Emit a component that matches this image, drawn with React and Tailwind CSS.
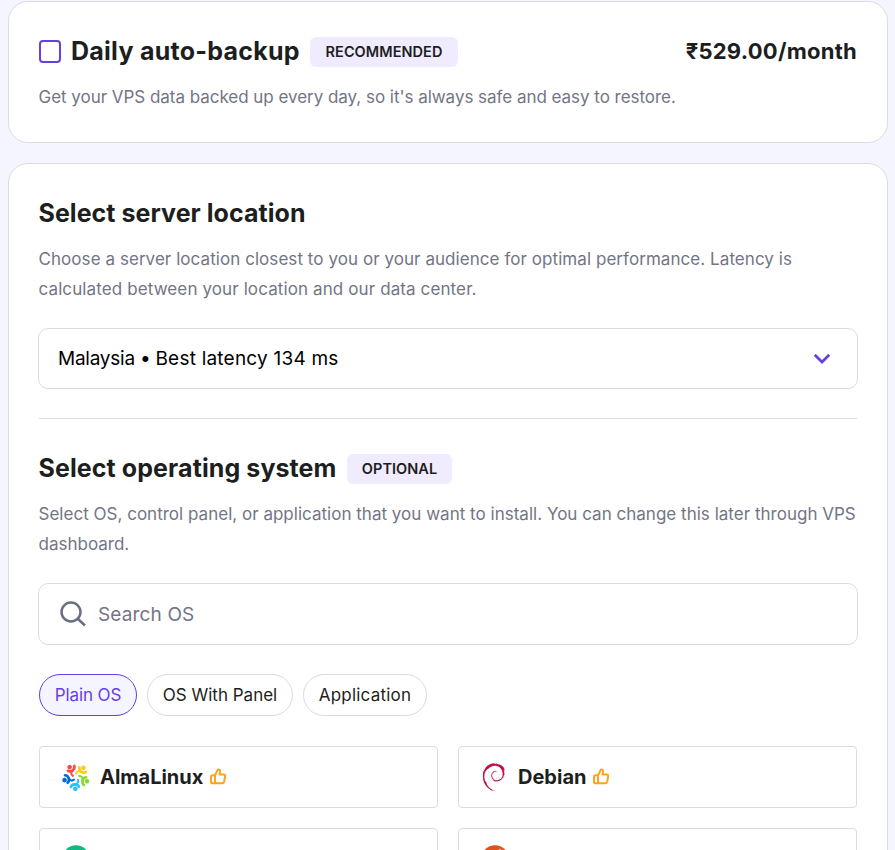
import { SiDebian } from "react-icons/si";

function Alma() {
  const colors = ["#ff4649", "#ffcb12", "#86da2f", "#24c2ff", "#0069da"];
  return (
    <svg className="h-[30px] w-[30px] shrink-0" viewBox="-15 -15 30 30" fill="none">
      {colors.map((c, i) => (
        <g key={c} transform={`rotate(${-33 + i * 72})`}>
          <circle cx="0" cy="-11.8" r="2.3" fill={c} />
          <path d="M-3.4 -9.6 Q-2.4 -7.4 0.4 -7.4 Q3.8 -7.4 4.6 -10.2" stroke={c} strokeWidth="2.6" strokeLinecap="round" />
          <path d="M1 -7.2 Q-3.4 -6.4 -2 -2.6" stroke={c} strokeWidth="2" strokeLinecap="round" />
        </g>
      ))}
    </svg>
  );
}

function Rocky() {
  return (
    <svg className="h-[28px] w-[28px] shrink-0" viewBox="0 0 28 28">
      <circle cx="14" cy="14" r="13.7" fill="#10b981" />
      <path d="M3 22 L16 9 L25 18 L22 21 L16 15 L6 25 Z" fill="#fff" />
    </svg>
  );
}

function Ubuntu() {
  return (
    <svg className="h-[28px] w-[28px] shrink-0" viewBox="0 0 28 28">
      <circle cx="14" cy="14" r="13.8" fill="#e2501c" />
      <circle cx="14" cy="14" r="6.5" fill="none" stroke="#fff" strokeWidth="2.6" />
      <g fill="#fff" stroke="#e2501c" strokeWidth="1">
        <circle cx="19" cy="6.6" r="2.8" />
        <circle cx="4.8" cy="14" r="2.8" />
        <circle cx="19" cy="21.4" r="2.8" />
      </g>
    </svg>
  );
}

function Thumb() {
  return (
    <svg className="ml-[5px] h-[20px] w-[20px] shrink-0" viewBox="0 0 20 20" fill="none" stroke="#ffa31a" strokeWidth="2" strokeLinejoin="round">
      <path d="M7 8.2 L10 2.4 Q12.4 2.2 12 4.7 L11.5 7.4 H15.5 Q17.5 7.5 17.1 9.5 L16.2 14.5 Q15.8 16.3 14 16.3 H7 Z" />
      <path d="M7 8.2 H4.6 Q3 8.2 3 9.8 V14.7 Q3 16.3 4.6 16.3 H7" />
    </svg>
  );
}

const card = "rounded-[20px] border border-[#dadce0] bg-white px-[29px]";
const para = "pl-[0.5px] text-[17px] leading-[30px] text-[#727586] whitespace-nowrap";
const h2 = "text-[25px] font-bold leading-[30px] text-[#1d1e20] whitespace-nowrap";
const badge = "flex h-[30px] items-center justify-center rounded-[6px] bg-[#f0ebff] text-[14.5px] font-semibold text-[#1d1e20]";
const os = "flex h-[62px] items-center rounded-[4px] border border-[#dadce0]";
const osName = "ml-[9px] text-[20px] font-bold text-[#1d1e20] whitespace-nowrap";
const chip = "flex h-[42px] items-center justify-center rounded-full border pt-px";

export default function App() {
  return (
    <div className="h-[850px] overflow-hidden bg-[#f4f5ff] pl-2 pr-[7px] pt-px font-['Inter',sans-serif]">
      <section className={`${card} h-[142px] pt-[34px]`}>
        <div className="flex h-[30px] items-center">
          <span className="ml-px h-[23px] w-[22px] rounded-[4px] border-2 border-[#673de6]" />
          <h2 className={`${h2} ml-[10px] w-[229px] tracking-[0.26px]`}>Daily auto-backup</h2>
          <span className={`${badge} mt-[2px] ml-[10px] w-[148px] tracking-[0.05px]`}>RECOMMENDED</span>
          <span className="ml-auto pr-px text-[22px] font-bold tracking-[0.25px] text-[#1d1e20]">₹529.00/month</span>
        </div>
        <p className={`${para} mt-4 tracking-[-0.035px]`}>Get your VPS data backed up every day, so it's always safe and easy to restore.</p>
      </section>
      <section className={`${card} mt-5 h-[760px] pt-[34px]`}>
        <h2 className={`${h2} pl-[0.5px] tracking-[0.04px]`}>Select server location</h2>
        <p className={`${para} mt-4`}>
          <span className="tracking-[0.06px]">Choose a server location closest to you or your audience for optimal performance. Latency is</span><br />
          <span className="tracking-[0.11px]">calculated between your location and our data center.</span>
        </p>
        <div className="mt-6 flex h-[61px] items-center justify-between rounded-[10px] border border-[#dadce0] pl-[19px] pr-[27px] pt-px">
          <span className="whitespace-pre text-[19px] text-black"><span className="tracking-[-0.25px]">Malaysia • </span><span className="tracking-[0.22px]">Best latency 134 ms</span></span>
          <svg className="h-[10px] w-[16px]" viewBox="0 0 16 10" fill="none" stroke="#673de6" strokeWidth="2.7"><path d="M0.8 0.8 L8 8 L15.2 0.8" /></svg>
        </div>
        <hr className="mx-px mt-[29px] border-[#dadce0]" />
        <div className="mt-[34px] flex h-[30px] items-center">
          <h2 className={`${h2} w-[299px] pl-[0.5px] tracking-[0.09px]`}>Select operating system</h2>
          <span className={`${badge} mt-[2px] ml-[10px] w-[105px] tracking-[0.05px]`}>OPTIONAL</span>
        </div>
        <p className={`${para} mt-4`}>
          <span className="tracking-[0.015px]">Select OS, control panel, or application that you want to install. You can change this later through VPS</span><br />
          <span>dashboard.</span>
        </p>
        <div className="mt-6 flex h-[62px] items-center rounded-[10px] border border-[#dadce0] pl-5">
          <svg className="h-7 w-7" viewBox="0 0 28 28" fill="none" stroke="#6b6f82" strokeWidth="2.5"><circle cx="12" cy="12" r="9.5" /><path d="M18.5 18.5 L26 25.5" /></svg>
          <span className="ml-[11px] pt-[2px] text-[19px] tracking-[0.15px] text-[#727586]">Search OS</span>
        </div>
        <div className="ml-px mt-[29px] flex gap-[10px] text-[17px] text-[#1d1e20]">
          <span className={`${chip} w-[98px] border-[#673de6] bg-[#f4f5ff] tracking-[-0.1px] text-[#673de6]`}>Plain OS</span>
          <span className={`${chip} w-[146px] border-[#dadce0]`}>OS With Panel</span>
          <span className={`${chip} w-[124px] border-[#dadce0] tracking-[0.2px]`}>Application</span>
        </div>
        <div className="mx-px mt-[30px] grid grid-cols-2 gap-5">
          <div className={`${os} pl-[21px]`}><Alma /><span className={`${osName} tracking-[-0.02px]`}>AlmaLinux</span><Thumb /></div>
          <div className={`${os} pl-[21px]`}><SiDebian className="h-[28px] w-[28px]" color="#c00d45" /><span className={`${osName} pl-px`}>Debian</span><Thumb /></div>
          <div className={`${os} pl-[22px]`}><Rocky /></div>
          <div className={`${os} pl-[22px]`}><Ubuntu /></div>
        </div>
      </section>
    </div>
  );
}
